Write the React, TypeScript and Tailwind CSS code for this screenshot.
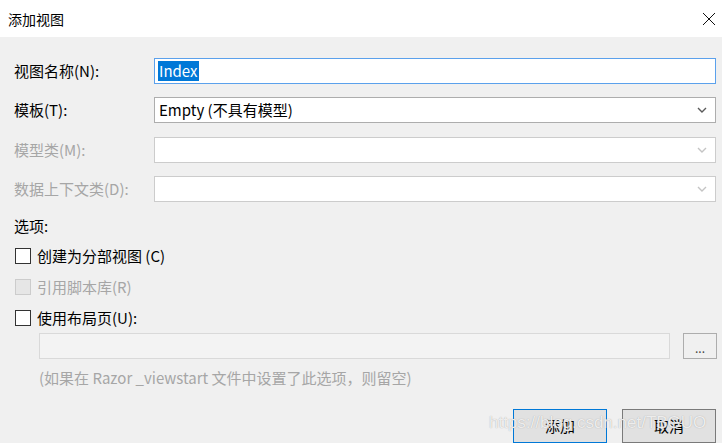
const font = { fontFamily: '"Noto Sans CJK SC", "Noto Sans", sans-serif' };

function Chevron({ color }: { color: string }) {
  return (
    <svg width="10" height="6" viewBox="0 0 10 6" fill="none">
      <path d="M1 1l4 4 4-4" stroke={color} strokeWidth="1.4" />
    </svg>
  );
}

function FieldRow({
  label,
  disabled,
  children,
}: {
  label: string;
  disabled?: boolean;
  children: React.ReactNode;
}) {
  return (
    <div className="flex items-center h-[26px]">
      <span
        className={`w-[154px] shrink-0 pl-[14px] text-[15px] leading-[20px] ${
          disabled ? "text-[#a6a6a6]" : "text-black"
        }`}
      >
        {label}
      </span>
      <div className="flex-1 h-full">{children}</div>
    </div>
  );
}

function Select({ value, disabled }: { value?: string; disabled?: boolean }) {
  return (
    <div
      className={`flex items-center justify-between h-full bg-white border pl-[4px] pr-[8px] ${
        disabled ? "border-[#cccccc]" : "border-[#adadad]"
      }`}
    >
      <span className="text-[15px] leading-[20px] text-black">{value}</span>
      <Chevron color={disabled ? "#c4c4c4" : "#5a5a5a"} />
    </div>
  );
}

function Check({ label, disabled }: { label: string; disabled?: boolean }) {
  return (
    <div className="flex items-center h-[20px] pl-[15px]">
      <span
        className={`w-[16px] h-[16px] border ${
          disabled ? "border-[#cccccc] bg-[#e6e6e6]" : "border-[#333333] bg-white"
        }`}
      />
      <span
        className={`ml-[6px] text-[15px] leading-[20px] ${
          disabled ? "text-[#a6a6a6]" : "text-black"
        }`}
      >
        {label}
      </span>
    </div>
  );
}

export default function App() {
  return (
    <div className="w-[722px] h-[443px] bg-[#f0f0f0] flex flex-col relative overflow-hidden" style={font}>
      <div className="h-[37px] shrink-0 bg-white flex items-center justify-between pl-[8px] pr-[6px]">
        <span className="text-[14px] leading-[20px] text-black">添加视图</span>
        <svg width="14" height="14" viewBox="0 0 14 14" fill="none">
          <path d="M1 1l12 12M13 1L1 13" stroke="#111" strokeWidth="1" />
        </svg>
      </div>

      <div className="flex flex-col pr-[6px] pt-[21px]">
        <FieldRow label="视图名称(N):">
          <div className="h-full bg-white border border-[#5ba1ec] flex items-center pl-[3px]">
            <span className="bg-[#0078d7] text-white text-[15px] leading-[20px] px-[1px]">Index</span>
          </div>
        </FieldRow>
        <div className="h-[13px]" />
        <FieldRow label="模板(T):">
          <Select value="Empty (不具有模型)" />
        </FieldRow>
        <div className="h-[14px]" />
        <FieldRow label="模型类(M):" disabled>
          <Select disabled />
        </FieldRow>
        <div className="h-[13px]" />
        <FieldRow label="数据上下文类(D):" disabled>
          <Select disabled />
        </FieldRow>
      </div>

      <div className="pl-[14px] mt-[14px] text-[15px] leading-[20px] text-black">选项:</div>
      <div className="mt-[10px] flex flex-col gap-[11px]">
        <Check label="创建为分部视图 (C)" />
        <Check label="引用脚本库(R)" disabled />
        <Check label="使用布局页(U):" />
      </div>

      <div className="flex items-center mt-[5px] pl-[39px] pr-[5px] h-[27px] gap-[13px]">
        <div className="flex-1 h-full bg-[#f3f3f3] border border-[#d9d9d9]" />
        <div className="w-[34px] h-full border border-[#adadad] flex items-end justify-center pb-[4px]">
          <span className="text-[12px] leading-[12px] text-[#444]">...</span>
        </div>
      </div>
      <div className="pl-[39px] mt-[9px] text-[15px] leading-[20px] text-[#a6a6a6]">
        (如果在 Razor _viewstart 文件中设置了此选项，则留空)
      </div>

      <div className="flex justify-end gap-[15px] pr-[6px] mt-[21px]">
        <div className="w-[94px] h-[34px] bg-[#e1e1e1] border border-[#0078d7] flex items-center justify-center text-[15px] text-black">
          添加
        </div>
        <div className="w-[94px] h-[34px] bg-[#e1e1e1] border border-[#7a7a7a] flex items-center justify-center text-[15px] text-black">
          取消
        </div>
      </div>

      <div
        className="absolute left-[489px] top-[412px] text-[17px] leading-[22px] text-white/80 pointer-events-none"
        style={{ fontFamily: '"Liberation Sans", Arial, sans-serif', textShadow: "0 0 1px #999" }}
      >
        https://blog.csdn.net/TBGUO
      </div>
    </div>
  );
}
